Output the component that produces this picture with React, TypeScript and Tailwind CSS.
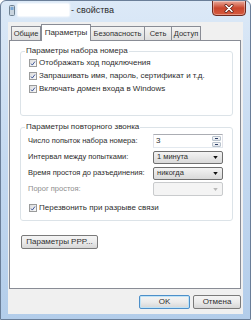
import React from "react";

const font = { fontFamily: '"Liberation Sans", Arial, sans-serif' };

const CheckBox = () => (
	<span className="w-[8px] h-[8px] shrink-0 border border-[#9a9b9b] bg-gradient-to-br from-[#dcdcdc] to-[#fbfbfb] flex items-center justify-center">
		<svg viewBox="0 0 8 8" className="w-[7px] h-[7px]">
			<path d="M1.4 4.1 L3.1 6.1 L6.6 1.4" stroke="#2c4791" strokeWidth="1.2" fill="none" />
		</svg>
	</span>
);

const CheckRow = ({ label }: { label: string }) => (
	<div className="h-[12px] flex items-center gap-[2px]">
		<CheckBox />
		<span className="text-[8px] leading-[10px] text-[#2e2e2e] whitespace-nowrap">{label}</span>
	</div>
);

const Arrow = ({ color }: { color: string }) => (
	<svg viewBox="0 0 6 4" className="w-[5px] h-[3px]">
		<path d="M0 0 H6 L3 4 Z" fill={color} />
	</svg>
);

const Select = ({ value, disabled }: { value?: string; disabled?: boolean }) => (
	<div
		className={
			disabled
				? "w-[70px] h-[14px] border border-[#c9cbcd] rounded-[2px] bg-[#f4f4f4] flex items-center justify-end pr-[4px]"
				: "w-[70px] h-[13px] border border-[#707070] rounded-[2px] bg-gradient-to-b from-[#f4f4f4] to-[#d9d9d9] flex items-center justify-between pl-[3px] pr-[4px]"
		}
	>
		{value && <span className="text-[7.5px] leading-[10px] text-[#2e2e2e]">{value}</span>}
		<Arrow color={disabled ? "#b8b8b8" : "#111"} />
	</div>
);

const Button = ({ label, w, primary }: { label: string; w: string; primary?: boolean }) => (
	<div
		className={`${w} h-[14px] rounded-[2px] border flex items-center justify-center text-[8px] leading-[10px] text-[#2e2e2e] bg-gradient-to-b from-[#f4f4f4] via-[#ebebeb] to-[#d6d6d6] ${
			primary ? "border-[#4d8fc9] shadow-[inset_0_0_0_1px_#bfe3f7]" : "border-[#7a7a7a]"
		}`}
	>
		{label}
	</div>
);

const tabs = [
	{ label: "Общие", w: "w-[30px]" },
	{ label: "Параметры", w: "w-[50px]", active: true },
	{ label: "Безопасность", w: "w-[55px]" },
	{ label: "Сеть", w: "w-[28px]" },
	{ label: "Доступ", w: "w-[30px]" },
];

export default function App() {
	return (
		<div
			style={font}
			className="w-[251px] h-[320px] overflow-hidden flex flex-col border border-[#6a7e98] rounded-t-[6px] bg-gradient-to-b from-[#dce9f7] via-[#c4d9f0] to-[#b3cdea]"
		>
			{/* TITLE BAR */}
			<div className="h-[21px] flex items-start shrink-0">
				<div className="flex items-center h-[16px] mt-[1px] pl-[8px]">
					<svg viewBox="0 0 6 11" className="w-[6px] h-[11px]">
						<rect x="0.5" y="0.5" width="5" height="10" rx="1" fill="#c9d4de" stroke="#6f8191" />
						<rect x="1.5" y="2" width="3" height="3" fill="#7aa7d4" />
					</svg>
					<div className="ml-[3px] w-[51px] h-[12px] bg-white rounded-[1px] shadow-[0_0_2px_1px_rgba(255,255,255,0.9)]" />
					<span className="ml-[2px] text-[9px] leading-[11px] text-[#2a2a2a]">- свойства</span>
				</div>
				<div className="ml-auto mr-[4px] w-[34px] h-[16px] mt-[-1px] rounded-b-[4px] border border-[#6e2a1f] bg-gradient-to-b from-[#e9a99b] via-[#c9462d] to-[#d65a3e] flex items-center justify-center shadow-[inset_0_0_0_1px_rgba(255,255,255,0.35)]">
					<svg viewBox="0 0 10 9" className="w-[10px] h-[9px]">
						<path d="M2 1.5 L8 7.5 M8 1.5 L2 7.5" stroke="#5a1d14" strokeWidth="3" strokeLinecap="round" />
						<path d="M2 1.5 L8 7.5 M8 1.5 L2 7.5" stroke="#fff" strokeWidth="1.6" strokeLinecap="round" />
					</svg>
				</div>
			</div>

			{/* CONTENT */}
			<div className="mx-[7px] h-[292px] bg-[#f0f0f0] flex flex-col shrink-0">
				{/* TABS */}
				<div className="h-[18px] pt-[2px] pl-[3px] flex items-end">
					{tabs.map((t) =>
						t.active ? (
							<div
								key={t.label}
								className={`${t.w} h-[17px] mb-[-1px] z-10 bg-white border border-b-0 border-[#898c95] flex items-center justify-center text-[8px] leading-[10px] text-[#2e2e2e]`}
							>
								{t.label}
							</div>
						) : (
							<div
								key={t.label}
								className={`${t.w} h-[14px] border border-b-0 border-[#898c95] -ml-px first:ml-0 bg-gradient-to-b from-[#f4f4f4] to-[#dedede] flex items-center justify-center text-[7.5px] leading-[10px] text-[#2e2e2e]`}
							>
								{t.label}
							</div>
						)
					)}
				</div>

				{/* PANEL */}
				<div className="ml-[1px] w-[232px] h-[249px] bg-white border border-[#898c95] pt-[5px] pl-[10px]">
					<fieldset className="w-[213px] border border-[#dce3e8] rounded-[3px] pl-[8px] pt-[1px] pb-[20px]">
						<legend className="ml-[-4px] px-[1px] text-[8px] leading-[10px] text-[#2e2e2e]">
							Параметры набора номера
						</legend>
						<div className="flex flex-col gap-[1px]">
							<CheckRow label="Отображать ход подключения" />
							<CheckRow label="Запрашивать имя, пароль, сертификат и т.д." />
							<CheckRow label="Включать домен входа в Windows" />
						</div>
					</fieldset>

					<fieldset className="mt-[6px] w-[213px] border border-[#dce3e8] rounded-[3px] pl-[7px] pr-[9px] pt-[2px] pb-[6px]">
						<legend className="ml-[-3px] px-[1px] text-[8px] leading-[10px] text-[#2e2e2e]">
							Параметры повторного звонка
						</legend>
						<div className="flex flex-col gap-[2px]">
							<div className="h-[14px] flex items-center justify-between">
								<span className="text-[7.5px] leading-[10px] text-[#2e2e2e]">Число попыток набора номера:</span>
								<div className="w-[70px] h-[14px] border border-[#abadb3] border-l-[#e2e3ea] border-r-[#e2e3ea] border-b-[#e3e9ef] bg-white flex items-center justify-between pl-[2px] pr-[1px]">
									<span className="text-[8px] leading-[10px] text-[#2e2e2e]">3</span>
									<div className="flex flex-col gap-px">
										<div className="w-[9px] h-[5px] border border-[#b8c2cc] rounded-[1px] bg-gradient-to-b from-[#f7f8fa] to-[#dfe4ea] flex items-center justify-center">
											<div className="w-[3px] h-px bg-[#2d3f66]" />
										</div>
										<div className="w-[9px] h-[5px] border border-[#b8c2cc] rounded-[1px] bg-gradient-to-b from-[#f7f8fa] to-[#dfe4ea] flex items-center justify-center">
											<div className="w-[3px] h-px bg-[#2d3f66]" />
										</div>
									</div>
								</div>
							</div>
							<div className="h-[14px] flex items-center justify-between">
								<span className="text-[7.5px] leading-[10px] text-[#2e2e2e]">Интервал между попытками:</span>
								<Select value="1 минута" />
							</div>
							<div className="h-[14px] flex items-center justify-between">
								<span className="text-[7.5px] leading-[10px] text-[#2e2e2e]">Время простоя до разъединения:</span>
								<Select value="никогда" />
							</div>
							<div className="h-[14px] flex items-center justify-between">
								<span className="text-[7.5px] leading-[10px] text-[#8d8d8d]">Порог простоя:</span>
								<Select disabled />
							</div>
							<div className="mt-[4px] pl-[1px]">
								<CheckRow label="Перезвонить при разрыве связи" />
							</div>
						</div>
					</fieldset>

					<div className="mt-[14px] ml-[1px]">
						<Button label="Параметры PPP..." w="w-[77px]" />
					</div>
				</div>

				{/* DIALOG BUTTONS */}
				<div className="flex justify-end gap-[3px] pt-[6px] pr-[2px]">
					<Button label="OK" w="w-[51px]" primary />
					<Button label="Отмена" w="w-[48px]" />
				</div>
			</div>
		</div>
	);
}
